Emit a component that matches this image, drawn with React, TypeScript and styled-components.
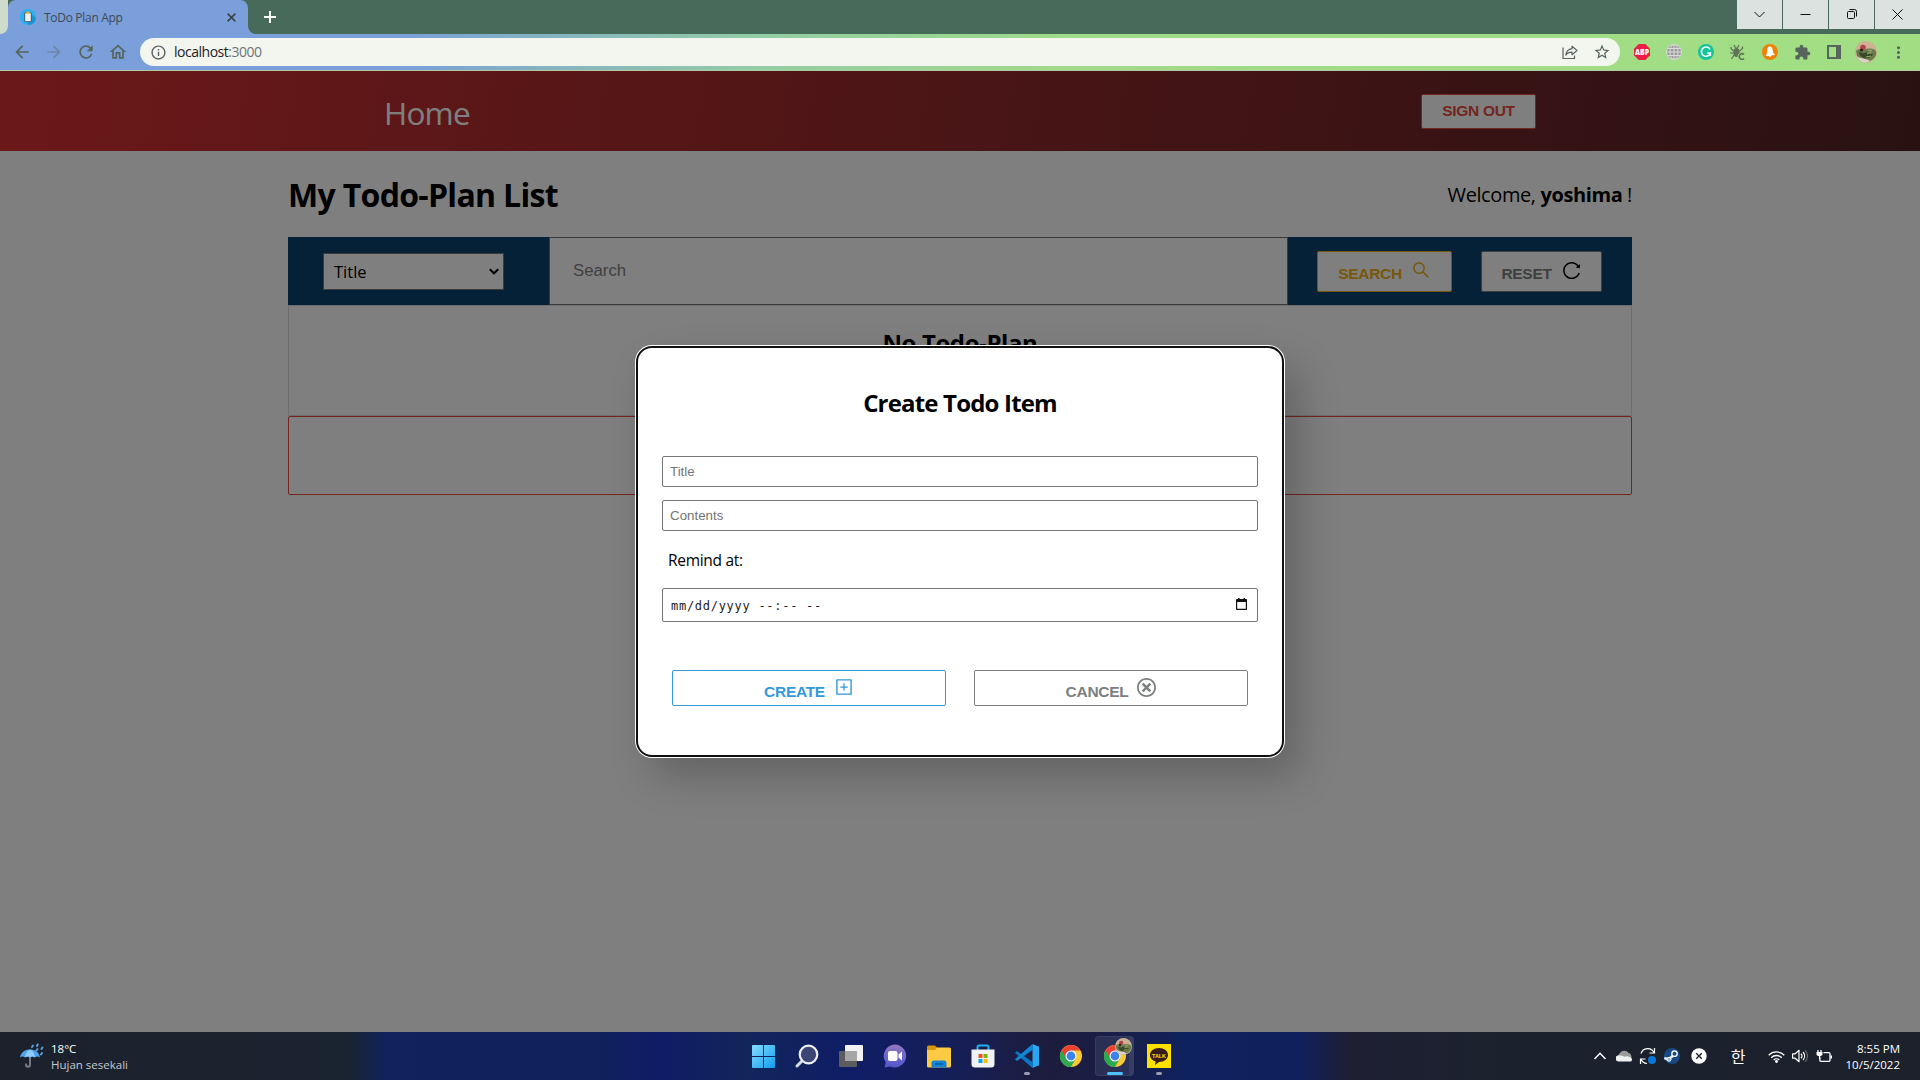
import React from "react";
import styled, { createGlobalStyle, css } from "styled-components";
import { MdArrowBack, MdArrowForward, MdRefresh, MdOutlineHome, MdInfoOutline, MdStarOutline, MdExtension, MdMoreVert } from "react-icons/md";
import { AiOutlineSearch, AiOutlineReload, AiOutlinePlusSquare } from "react-icons/ai";
import { ImCancelCircle } from "react-icons/im";

const ui = `"Segoe UI", "Open Sans", "Noto Sans", sans-serif`;
const arial = `"Liberation Sans", Arial, sans-serif`;

const GlobalStyle = createGlobalStyle`
  * { box-sizing: border-box; }
  body { margin: 0; background: #fff; font-family: ${ui}; overflow: hidden; }
  svg { display: block; flex: none; }
`;

const Screen = styled.div`
  width: 1920px;
  height: 1080px;
  display: flex;
  flex-direction: column;
  overflow: hidden;
`;

/* ---------- browser chrome ---------- */

const TabStrip = styled.div`
  height: 34px;
  display: flex;
  background: #476a5b;
`;
const PreviousTab = styled.div`
  width: 8px;
  background: #7a9fdb;
  &::before {
    content: "";
    display: block;
    height: 34px;
    background: #d0dccb;
    border-bottom-right-radius: 8px;
  }
`;
const Tab = styled.div`
  width: 240px;
  height: 34px;
  padding: 0 12px;
  display: flex;
  align-items: center;
  background: #7a9fdb;
  border-radius: 8px 8px 0 0;
`;
const TabCorner = styled.div`
  width: 8px;
  background: #7a9fdb;
  &::before {
    content: "";
    display: block;
    height: 34px;
    background: #476a5b;
    border-bottom-left-radius: 8px;
  }
`;
const TabTitle = styled.span`
  flex: 1;
  margin-left: 8px;
  font-size: 12px;
  letter-spacing: -0.3px;
  color: #3f4a52;
`;
const NewTab = styled.div`
  width: 28px;
  height: 34px;
  display: flex;
  align-items: center;
  justify-content: center;
`;
const WindowButtons = styled.div`
  margin-left: auto;
  display: flex;
  gap: 1px;
`;
const WindowButton = styled.div`
  width: 45px;
  height: 29px;
  display: flex;
  align-items: center;
  justify-content: center;
  background: #dce2e0;
`;
const Toolbar = styled.div`
  height: 37px;
  padding: 0 6px;
  display: flex;
  align-items: center;
  background: linear-gradient(90deg, #7a9fdb 0, #7a9fdb 400px, #82b0c4 520px, #93cda4 760px, #9fdb88 1080px, #a1de83 100%);
  border-bottom: 1px solid #b3c9a4;
`;
const ToolCell = styled.div<{ $faded?: boolean }>`
  width: 32px;
  height: 36px;
  display: flex;
  align-items: center;
  justify-content: center;
  color: #57645c;
  opacity: ${(p) => (p.$faded ? 0.4 : 1)};
`;
const Omnibox = styled.div`
  width: 1480px;
  height: 28px;
  margin: 0 6px;
  padding: 0 2px 0 10px;
  display: flex;
  align-items: center;
  border-radius: 14px;
  background: #f3f6ee;
  color: #5c6062;
`;
const Address = styled.span`
  flex: 1;
  margin-left: 7px;
  padding-bottom: 1px;
  font-size: 14px;
  letter-spacing: -0.48px;
  color: #70757a;
  b { font-weight: 400; color: #202124; }
`;

/* ---------- web page ---------- */

const Page = styled.main`
  height: 961px;
  position: relative;
  background: #fff;
`;
const Header = styled.header`
  height: 80px;
  padding: 0 384px;
  display: flex;
  align-items: center;
  justify-content: space-between;
  background: linear-gradient(100deg, #d83133, #522325);
`;
const HomeLink = styled.a`
  margin-top: 3px;
  font-size: 31.5px;
  letter-spacing: -0.8px;
  color: #fff;
`;
const tones = { red: "#e74c3c", yellow: "#eeb010", grey: "#7c7f80", blue: "#3498db" };
const Button = styled.button<{ $tone: keyof typeof tones; $width: number; $height: number; $drop?: number; $lift?: number }>`
  width: ${(p) => p.$width}px;
  height: ${(p) => p.$height}px;
  padding: 0;
  display: flex;
  align-items: center;
  justify-content: center;
  gap: 9px;
  font: bold 15.5px ${arial};
  letter-spacing: -0.3px;
  color: ${(p) => tones[p.$tone]};
  background: #fff;
  border: 1px solid currentColor;
  border-radius: 2px;
  span { padding-top: ${(p) => p.$drop ?? 0}px; }
  svg { margin-bottom: ${(p) => p.$lift ?? 0}px; }
`;
const Container = styled.section`
  width: 1344px;
  margin: 0 auto;
`;
const TitleRow = styled.div`
  height: 86px;
  padding-top: 1px;
  display: flex;
  align-items: center;
  justify-content: space-between;
`;
const PageTitle = styled.h1`
  margin: 0;
  font-size: 32px;
  font-weight: 700;
  letter-spacing: -0.68px;
`;
const Welcome = styled.div`
  font-size: 20px;
  letter-spacing: -0.4px;
`;
const SearchBar = styled.div`
  height: 68px;
  display: flex;
  background: #0a4270;
`;
const Filter = styled.div`
  width: 261px;
  padding: 16px 0 0 35px;
`;
const Select = styled.div`
  width: 181px;
  height: 37px;
  padding: 0 4px 0 10px;
  display: flex;
  align-items: center;
  justify-content: space-between;
  background: #fff;
  border: 1px solid #767676;
  font-size: 16.5px;
`;
const SearchInput = styled.input`
  width: 739px;
  padding: 0 23px;
  border: 1px solid #757575;
  background: #fff;
  font: 16.8px ${arial};
  &::placeholder { color: #828282; }
`;
const SearchActions = styled.div`
  flex: 1;
  padding: 14px 30px 0 29px;
  display: flex;
  justify-content: space-between;
`;
const ListBox = styled.div`
  height: 111px;
  padding-top: 20px;
  border: 1px solid #dcdcdc;
  text-align: center;
`;
const Heading = styled.h2<{ $spacing: number }>`
  margin: 0;
  font-size: 24px;
  line-height: 33px;
  font-weight: 700;
  letter-spacing: ${(p) => p.$spacing}px;
  text-align: center;
`;
const AddBox = styled.div`
  height: 79px;
  border: 1px solid #e74c3c;
  border-radius: 2px;
`;
const Backdrop = styled.div`
  position: absolute;
  inset: 0;
  padding-top: 275px;
  background: rgba(0, 0, 0, 0.5);
`;
const Dialog = styled.div`
  width: 648px;
  height: 411px;
  margin: 0 auto;
  padding: 38px 24px 0;
  background: #fff;
  border: 2px solid #101010;
  border-radius: 16px;
  box-shadow: 0 0 0 1px #fff, 15px 20px 40px rgba(0, 0, 0, 0.22);
`;
const DialogHead = styled.div`
  height: 70px;
`;
const fieldFrame = css`
  display: flex;
  width: 596px;
  border: 1px solid #767676;
  border-radius: 2px;
  padding: 0 10px 0 7px;
`;
const Field = styled.input`
  ${fieldFrame}
  height: 31px;
  margin-bottom: 13px;
  font: 13.33px ${arial};
  &::placeholder { color: #757575; }
`;
const Label = styled.label`
  display: block;
  height: 44px;
  padding: 5px 0 0 6px;
  font-size: 15.5px;
  line-height: 22px;
  letter-spacing: -0.3px;
`;
const DateField = styled.div`
  ${fieldFrame}
  height: 34px;
  padding-left: 8px;
  align-items: center;
  justify-content: space-between;
  font: 12px "DejaVu Sans Mono", monospace;
  letter-spacing: 0.72px;
  color: #222;
  span { padding-top: 2px; }
  svg { margin-bottom: 1px; }
`;
const DialogActions = styled.div`
  margin: 48px 10px 0;
  display: flex;
  justify-content: space-between;
`;

/* ---------- taskbar ---------- */

const Taskbar = styled.footer`
  height: 48px;
  display: grid;
  grid-template-columns: 741px 440px 1fr;
  color: #fff;
  font-size: 12px;
  background: linear-gradient(90deg, #1c212c 0, #1a2430 345px, #10235a 385px, #10215c 600px, #101b66 660px, #12265a 745px, #0f1d66 850px, #151f58 950px, #1d1c3c 1050px, #161f4d 1140px, #0f2260 1190px, #10205c 1300px, #1e1e33 1350px, #1b222d 1500px, #1c212c 100%);
`;
const Weather = styled.div`
  padding-left: 20px;
  display: flex;
  align-items: center;
  gap: 7px;
`;
const Lines = styled.div<{ $right?: boolean }>`
  display: flex;
  flex-direction: column;
  padding-top: 1px;
  line-height: 16px;
  font-size: 11.5px;
  text-align: ${(p) => (p.$right ? "right" : "left")};
  small { font-size: inherit; color: ${(p) => (p.$right ? "#fff" : "#c5c8cc")}; }
`;
const Apps = styled.div`
  display: flex;
`;
const AppCell = styled.div<{ $state?: "open" | "active" }>`
  width: 44px;
  height: 48px;
  position: relative;
  display: flex;
  align-items: center;
  justify-content: center;
  ${(p) =>
    p.$state === "active" &&
    css`
      &::before {
        content: "";
        position: absolute;
        inset: 4px 3px 4px 2px;
        border-radius: 4px;
        background: rgba(255, 255, 255, 0.08);
        border: 1px solid rgba(255, 255, 255, 0.07);
        border-right-width: 5px;
      }
    `}
  ${(p) =>
    p.$state &&
    css`
      &::after {
        content: "";
        position: absolute;
        bottom: 5px;
        width: ${p.$state === "active" ? 16 : 6}px;
        height: 3px;
        border-radius: 2px;
        background: ${p.$state === "active" ? "#4cc2ff" : "#9a9dac"};
      }
    `}
  svg { position: relative; }
`;
const Tray = styled.div`
  padding-right: 20px;
  display: flex;
  align-items: center;
  justify-content: flex-end;
`;
const TrayCell = styled.div<{ $before?: number }>`
  width: 24px;
  margin-left: ${(p) => p.$before ?? 0}px;
  display: flex;
  justify-content: center;
  font: 16px/20px "Noto Sans CJK KR", sans-serif;
`;
const Clock = styled(Lines)`
  width: 64px;
`;

/* ---------- drawings ---------- */

const Favicon = () => (
  <svg width="16" height="16" viewBox="0 0 16 16">
    <circle cx="8" cy="8" r="8" fill="#25b1f5" />
    <path d="M10 4l6 5a8 8 0 0 1-7 7l-3-4z" fill="#1596d8" />
    <rect x="4.3" y="3.4" width="7.4" height="9.6" rx="1" fill="#57535a" />
    <rect x="5.2" y="4.2" width="5.6" height="8" fill="#eef0f4" />
    <rect x="6.2" y="2.6" width="3.6" height="2" fill="#f1a72b" />
  </svg>
);
const Cross = ({ size, color, width }: { size: number; color: string; width: number }) => (
  <svg width={size} height={size} viewBox="0 0 10 10" stroke={color} strokeWidth={width}>
    <path d="M.7.7l8.6 8.6M9.3.7L.7 9.3" />
  </svg>
);
const Share = () => (
  <svg width="16" height="16" viewBox="0 0 16 16" fill="none" stroke="#5c6062" strokeWidth="1.2">
    <path d="M1 3.5v11h11.5v-3" />
    <path d="M10 2.2l5 4.3-5 4.2V8.2c-3 0-5 1-6.2 2.9C4.2 7.5 6.5 5.2 10 4.700z" strokeLinejoin="round" />
  </svg>
);
const Abp = () => (
  <svg width="16" height="16" viewBox="0 0 16 16">
    <path d="M4.700 0h6.600L16 4.700v6.600L11.300 16H4.700L0 11.300V4.700z" fill="#ed1e45" />
    <text x="8" y="11" textAnchor="middle" fontFamily="Open Sans" fontWeight="800" fontSize="8" fill="#fff" textLength="14" lengthAdjust="spacingAndGlyphs">ABP</text>
  </svg>
);
const Globe = () => (
  <svg width="16" height="16" viewBox="0 0 16 16" fill="none" stroke="#d9dcd9" strokeWidth="1">
    <circle cx="8" cy="8" r="7.500" fill="#9b9b9b" />
    <path d="M0 8h16M8 0v16M1 4.500h14M1 11.500h14" />
    <ellipse cx="8" cy="8" rx="4" ry="7.500" />
  </svg>
);
const Grammarly = () => (
  <svg width="16" height="16" viewBox="0 0 16 16">
    <circle cx="8" cy="8" r="8" fill="#15c39a" />
    <path d="M12 5.400A4.600 4.600 0 1 0 12.400 9H9.200M12.400 9v3" fill="none" stroke="#fff" strokeWidth="1.500" />
  </svg>
);
const Bug = () => (
  <svg width="16" height="16" viewBox="0 0 16 16" fill="none" stroke="#5f7158" strokeWidth="1.200">
    <ellipse cx="6.500" cy="8.500" rx="2.600" ry="4" fill="#5f7158" />
    <path d="M4 1l1.500 3h2L9 1M3.500 7L1 4.500V3M3.500 9H0M4 11l-2.500 4M9.500 7l3-2.500V2.500M9.500 9H13" />
    <path d="M14 10.600a2.800 2.800 0 1 0 0 4" stroke="#a0dc84" strokeWidth="3.500" />
    <path d="M14 10.400a2.800 2.800 0 1 0 0 4.200" strokeWidth="1.600" />
  </svg>
);
const Bell = () => (
  <svg width="16" height="16" viewBox="0 0 16 16">
    <circle cx="8" cy="8" r="8" fill="#ee8208" />
    <path d="M7 2.600c2.600-.6 3.400 1.200 3.600 3.200.2 2.400.6 3.500 2.600 5l-3.800.6c-.3 1.600-2 1.800-2.400.5L3.600 12c1.400-1.800 1.500-3.400 1.600-5.600.1-1.600.6-3 1.800-3.800z" fill="#fff" />
  </svg>
);
const SidePanel = () => (
  <svg width="14" height="14" viewBox="0 0 14 14">
    <path d="M0 0h14v14H0zM2 2v10h7V2z" fill="#57645c" fillRule="evenodd" />
  </svg>
);
const Avatar = ({ size }: { size: number }) => (
  <svg width={size} height={size} viewBox="0 0 22 22">
    <circle cx="11" cy="11" r="11" fill="#cdb193" />
    <path d="M1 10c3-3 5-2 8-1 4-2 9-2 12 1 1 5-2 8-6 10-6 1-11-1-13-5z" fill="#6c7a4a" />
    <path d="M4 11c2 0 3 2 5 1 3-2 5 2 9 1-1 3-5 5-9 4-3-1-5-3-5-6z" fill="#39472b" />
    <circle cx="8" cy="6.500" r="2.800" fill="#b5404c" />
    <circle cx="6.500" cy="9" r="1.500" fill="#2a1e1e" />
    <path d="M2 15c3 3 9 2 13 5-5 3-11 1-13-5z" fill="#ddd3ca" />
    <path d="M12 13l4-2M11 16l5-1M13 9l4 1" stroke="#9db070" strokeWidth="1" />
  </svg>
);
const CalendarIcon = () => (
  <svg width="11" height="13" viewBox="0 0 11 13">
    <path d="M2 0h1.500v1h4V0H9v1h1.200c.4 0 .8.4.8.8v9.400c0 .4-.4.8-.8.8H.8c-.4 0-.8-.4-.8-.8V1.800C0 1.400.4 1 .8 1H2zM1.200 4v6.800h8.600V4z" fill="#111" fillRule="evenodd" />
  </svg>
);
const Umbrella = () => (
  <svg width="24" height="26" viewBox="0 0 24 26">
    <path d="M10 7v14.500c0 3-4 3-4 0V20.500" fill="none" stroke="#777b80" strokeWidth="2" />
    <path d="M0 14.500C1 9 5 6.500 10 6.500S19 9 20 14.500c-2-1.500-3.500-1.500-5 0-2-1.500-3.500-1.500-5 0-1.500-1.500-3-1.500-5 0-1.500-1.500-3.500-1.500-5 0z" fill="#4ea3ee" />
    <path d="M5 14.500c.5-4 2-6.500 5-8 3 1.500 4.500 4 5 8-2-1.500-3.500-1.500-5 0-1.500-1.500-3-1.500-5 0z" fill="#8ccbfb" />
    <path d="M12 4l1-1.500M17 3l.7-1.500M16.500 7.500l1-1.500M21.500 6l1-1.500M21 11.500l1-1.500" stroke="#5c9fdb" strokeWidth="2" strokeLinecap="round" />
  </svg>
);
const Windows = () => (
  <svg width="23" height="23" viewBox="0 0 23 23">
    <defs>
      <linearGradient id="win" x1="0" y1="0" x2="1" y2="1">
        <stop offset="0" stopColor="#84defc" />
        <stop offset="1" stopColor="#119cf0" />
      </linearGradient>
    </defs>
    <path d="M0 1q0-1 1-1h10v11H0zM12 0h10q1 0 1 1v10H12zM0 12h11v11H1q-1 0-1-1zM12 12h11v10q0 1-1 1H12z" fill="url(#win)" />
  </svg>
);
const SearchGlass = () => (
  <svg width="24" height="24" viewBox="0 0 24 24" fill="none">
    <path d="M8 16l-6 6" stroke="#d5d9e2" strokeWidth="3" strokeLinecap="round" />
    <circle cx="13.500" cy="10.500" r="8.800" fill="#3c4674" stroke="#eceef3" strokeWidth="2.200" />
  </svg>
);
const TaskView = () => (
  <svg width="24" height="24" viewBox="0 0 24 24">
    <rect x="6" y="1" width="18" height="16" rx="1" fill="#f2f2f2" />
    <rect x="0" y="7" width="18" height="16" rx="1" fill="#5c5c5c" />
    <path d="M6 7h12v10H6z" fill="#a6a6a6" />
  </svg>
);
const Chat = () => (
  <svg width="24" height="24" viewBox="0 0 24 24">
    <defs>
      <linearGradient id="chat" x1="0" y1="0" x2="0" y2="1">
        <stop offset="0" stopColor="#9a78b8" />
        <stop offset=".5" stopColor="#6b66cf" />
        <stop offset="1" stopColor="#5558c8" />
      </linearGradient>
    </defs>
    <path d="M12 .5A11.500 11.500 0 1 1 7 22.500L1.500 23.500l1.300-5A11.500 11.500 0 0 1 12 .5z" fill="url(#chat)" />
    <rect x="5" y="7" width="9.500" height="10" rx="2" fill="#fff" />
    <path d="M15.500 10.500l3.500-3v9l-3.500-3z" fill="#fff" />
  </svg>
);
const Folder = () => (
  <svg width="24" height="23" viewBox="0 0 24 23">
    <path d="M0 2q0-1.500 1.500-1.500H8L10.500 3 8 6H0z" fill="#d9960d" />
    <path d="M0 5h8l2-2.500h12.500Q24 2.500 24 4v17q0 1.500-1.500 1.500h-21Q0 22.500 0 21z" fill="#fccb43" />
    <path d="M4.500 22.500V18Q4.500 15.500 7 15.500h10q2.500 0 2.500 2.500v4.500z" fill="#1684d6" />
    <path d="M8 19h8" stroke="#0b5ba5" strokeWidth="1.500" />
  </svg>
);
const Store = () => (
  <svg width="24" height="24" viewBox="0 0 24 24">
    <path d="M6.500 6V3q0-1.500 1.500-1.500h8q1.500 0 1.500 1.500v3" fill="none" stroke="#25aef0" strokeWidth="2" />
    <path d="M.5 5.500h23V20q0 3.500-3.500 3.500H4Q.5 23.500.5 20z" fill="#f0f2f5" />
    <path d="M7.500 10h4v4h-4z" fill="#f25022" />
    <path d="M12.500 10h4v4h-4z" fill="#7fba00" />
    <path d="M7.500 15h4v4h-4z" fill="#00a4ef" />
    <path d="M12.500 15h4v4h-4z" fill="#ffb900" />
  </svg>
);
const VsCode = () => (
  <svg width="24" height="24" viewBox="0 0 24 24">
    <path d="M17.500 0L24 2.800v18.400L17.500 24z" fill="#2aa7f2" />
    <path d="M17.500 24L0 8.800l2-1.800 16 11.500z" fill="#0a77c4" />
    <path d="M17.500 0L0 15.200 2 17 18 5.500z" fill="#1287d3" />
  </svg>
);
const Chrome = () => (
  <svg width="24" height="24" viewBox="0 0 24 24">
    <circle cx="12" cy="12" r="11" fill="#fcc934" />
    <path d="M12 12L2.470 6.500A11 11 0 0 1 21.500 6.500H12z" fill="#ea4335" />
    <path d="M2.470 6.500A11 11 0 0 0 12 23l4.760-8.250L12 12z" fill="#2da94f" />
    <path d="M2.470 6.500L7.200 14.800 12 12V6.500z" fill="#ea4335" />
    <path d="M2.470 6.500l4.770 8.250L12 23A11 11 0 0 1 2.470 6.500z" fill="#2da94f" />
    <circle cx="12" cy="12" r="5.500" fill="#fff" />
    <circle cx="12" cy="12" r="4.400" fill="#3b82ee" />
  </svg>
);
const ProfileBadge = styled.div`
  position: absolute;
  top: 6px;
  right: 5px;
`;
const Kakao = () => (
  <svg width="24" height="24" viewBox="0 0 24 24">
    <path d="M0 0h24v24H0z" fill="#fbe000" />
    <path d="M12 4c5.200 0 9 3 9 7s-3.800 7-9 7l-4 3 .7-3.600C5.300 16.500 3 14 3 11c0-4 3.800-7 9-7z" fill="#391b1b" />
    <text x="12" y="13.500" textAnchor="middle" fontFamily="Liberation Sans" fontWeight="700" fontSize="6.200" fill="#fbe000" textLength="14" lengthAdjust="spacingAndGlyphs">TALK</text>
  </svg>
);
const Chevron = () => (
  <svg width="12" height="8" viewBox="0 0 12 8" fill="none" stroke="#fff" strokeWidth="1.400"><path d="M.5 7L6 1.300 11.500 7" /></svg>
);
const Cloud = () => (
  <svg width="17" height="12" viewBox="0 0 17 12">
    <path d="M3 8a4 4 0 0 1 1-5A5 5 0 0 1 12.500 3c2 0 3 2 3 5z" fill="#9b9b9b" />
    <path d="M3.500 11.500a3.200 3.200 0 1 1 .5-6c2 0 3 .6 4.500 1.300 1.500-.8 4-1 5 .3 3 .2 3.500 4.400.5 4.400z" fill="#f0f0f0" />
  </svg>
);
const Sync = () => (
  <svg width="18" height="18" viewBox="0 0 18 18" fill="none" stroke="#fff" strokeWidth="1.200">
    <path d="M2 6.500A7 7 0 0 1 15 5.500M15.500 1v5h-5M1.500 17v-5h5M2 12a7 7 0 0 0 6 4.500" />
    <circle cx="13" cy="13" r="4" fill="#0a78d8" stroke="none" />
  </svg>
);
const Steam = () => (
  <svg width="16" height="16" viewBox="0 0 16 16">
    <circle cx="8" cy="8" r="8" fill="#164a86" />
    <path d="M.3 10l4 1.500 5-4" stroke="#dfe8f2" strokeWidth="2.600" fill="none" />
    <circle cx="10.500" cy="5.700" r="2.700" fill="#164a86" stroke="#fff" strokeWidth="1.300" />
    <circle cx="5" cy="11.300" r="2" fill="#8cb4dd" stroke="#fff" />
  </svg>
);
const CloseDisc = () => (
  <svg width="16" height="16" viewBox="0 0 16 16">
    <circle cx="8" cy="8" r="7.700" fill="#fff" />
    <path d="M5.200 5.200l5.600 5.600M10.800 5.200l-5.600 5.600" stroke="#20242e" strokeWidth="1.400" />
  </svg>
);
const Wifi = () => (
  <svg width="17" height="13" viewBox="0 0 17 13" fill="none" stroke="#fff" strokeWidth="1.300">
    <path d="M.7 5.200a11 11 0 0 1 15.600 0M3.200 7.700a7.500 7.500 0 0 1 10.600 0M5.700 10a4 4 0 0 1 5.600 0" />
    <circle cx="8.500" cy="11.500" r="1.400" fill="#fff" stroke="none" />
  </svg>
);
const Volume = () => (
  <svg width="16" height="14" viewBox="0 0 16 14" fill="none" stroke="#fff" strokeWidth="1.200">
    <path d="M.6 4.800h2.600L7 1.300v11.400L3.200 9.200H.6z" strokeLinejoin="round" />
    <path d="M9 4.800a3 3 0 0 1 0 4.400M11 3a6 6 0 0 1 0 8" />
    <path d="M13 1.200a8 8 0 0 1 0 11.600" stroke="#60656f" />
  </svg>
);
const Battery = () => (
  <svg width="16" height="13" viewBox="0 0 16 13" fill="none" stroke="#fff" strokeWidth="1.300">
    <path d="M7.500 2.700h5.300q1.200 0 1.200 1.200v6.200q0 1.200-1.200 1.200H5q-1.200 0-1.200-1.200V7.500" />
    <path d="M15.200 5.500v3" strokeWidth="1.600" />
    <path d="M.5 2h6v2.200q0 1.800-3 1.800t-3-1.800z" fill="#fff" stroke="none" />
    <path d="M2 0v2.500M5 0v2.500M3.600 5v4" />
  </svg>
);

const windowGlyphs = [
  <path key="down" d="M.5 3l5 5 5-5" />,
  <path key="min" d="M.5 5.500h10" />,
  <path key="restore" d="M2.500 2.500h5q1 0 1 1v5q0 1-1 1h-5q-1 0-1-1v-5q0-1 1-1zM3.500.5h5q2 0 2 2v5" />,
  <path key="close" d="M.5.5l10 10M10.500.5l-10 10" />,
];

const extensions = [<Abp />, <Globe />, <Grammarly />, <Bug />, <Bell />, <MdExtension size={17} />, <SidePanel />, <Avatar size={22} />, <MdMoreVert size={19} />];

const Browser = () => (
  <>
    <TabStrip>
      <PreviousTab />
      <Tab>
        <Favicon />
        <TabTitle>ToDo Plan App</TabTitle>
        <Cross size={9} color="#3a4348" width={1.8} />
      </Tab>
      <TabCorner />
      <NewTab>
        <svg width="12" height="12" viewBox="0 0 12 12" stroke="#fff" strokeWidth="2"><path d="M6 0v12M0 6h12" /></svg>
      </NewTab>
      <WindowButtons>
        {windowGlyphs.map((glyph, i) => (
          <WindowButton key={i}>
            <svg width="11" height="11" viewBox="0 0 11 11" fill="none" stroke="#111" strokeWidth="1">{glyph}</svg>
          </WindowButton>
        ))}
      </WindowButtons>
    </TabStrip>
    <Toolbar>
      <ToolCell><MdArrowBack size={20} /></ToolCell>
      <ToolCell $faded><MdArrowForward size={20} /></ToolCell>
      <ToolCell><MdRefresh size={20} /></ToolCell>
      <ToolCell><MdOutlineHome size={20} /></ToolCell>
      <Omnibox>
        <MdInfoOutline size={17} />
        <Address><b>localhost</b>:3000</Address>
        <ToolCell><Share /></ToolCell>
        <ToolCell><MdStarOutline size={18} /></ToolCell>
      </Omnibox>
      {extensions.map((icon, i) => (
        <ToolCell key={i}>{icon}</ToolCell>
      ))}
    </Toolbar>
  </>
);

const CreateDialog = () => (
  <Backdrop>
    <Dialog>
      <DialogHead>
        <Heading $spacing={-0.82}>Create Todo Item</Heading>
      </DialogHead>
      <Field placeholder="Title" />
      <Field placeholder="Contents" />
      <Label>Remind at:</Label>
      <DateField>
        <span>mm/dd/yyyy --:-- --</span>
        <CalendarIcon />
      </DateField>
      <DialogActions>
        <Button $tone="blue" $width={274} $height={36} $drop={7} $lift={3}>
          <span>CREATE</span>
          <AiOutlinePlusSquare size={20} />
        </Button>
        <Button $tone="grey" $width={274} $height={36} $drop={7} $lift={2}>
          <span>CANCEL</span>
          <ImCancelCircle size={19} />
        </Button>
      </DialogActions>
    </Dialog>
  </Backdrop>
);

const TodoPage = () => (
  <Page>
    <Header>
      <HomeLink>Home</HomeLink>
      <Button $tone="red" $width={115} $height={35}><span>SIGN OUT</span></Button>
    </Header>
    <Container>
      <TitleRow>
        <PageTitle>My Todo-Plan List</PageTitle>
        <Welcome>Welcome, <b>yoshima</b> !</Welcome>
      </TitleRow>
      <SearchBar>
        <Filter>
          <Select>
            Title
            <svg width="10" height="7" viewBox="0 0 10 7" fill="none" stroke="#000" strokeWidth="2"><path d="M.8 1.200L5 5.300l4.200-4.100" /></svg>
          </Select>
        </Filter>
        <SearchInput placeholder="Search" />
        <SearchActions>
          <Button $tone="yellow" $width={135} $height={41} $drop={5} $lift={3}>
            <span>SEARCH</span>
            <AiOutlineSearch size={20} />
          </Button>
          <Button $tone="grey" $width={121} $height={41} $drop={5} $lift={3}>
            <span>RESET</span>
            <AiOutlineReload size={21} color="#000" />
          </Button>
        </SearchActions>
      </SearchBar>
      <ListBox><Heading $spacing={-0.4}>No Todo-Plan</Heading></ListBox>
      <AddBox />
    </Container>
    <CreateDialog />
  </Page>
);

const SystemBar = () => (
  <Taskbar>
    <Weather>
      <Umbrella />
      <Lines><span>18°C</span><small>Hujan sesekali</small></Lines>
    </Weather>
    <Apps>
      <AppCell><Windows /></AppCell>
      <AppCell><SearchGlass /></AppCell>
      <AppCell><TaskView /></AppCell>
      <AppCell><Chat /></AppCell>
      <AppCell><Folder /></AppCell>
      <AppCell><Store /></AppCell>
      <AppCell $state="open"><VsCode /></AppCell>
      <AppCell><Chrome /></AppCell>
      <AppCell $state="active">
        <Chrome />
        <ProfileBadge><Avatar size={17} /></ProfileBadge>
      </AppCell>
      <AppCell $state="open"><Kakao /></AppCell>
    </Apps>
    <Tray>
      <TrayCell><Chevron /></TrayCell>
      <TrayCell><Cloud /></TrayCell>
      <TrayCell><Sync /></TrayCell>
      <TrayCell><Steam /></TrayCell>
      <TrayCell $before={3}><CloseDisc /></TrayCell>
      <TrayCell $before={15}>한</TrayCell>
      <TrayCell $before={14}><Wifi /></TrayCell>
      <TrayCell><Volume /></TrayCell>
      <TrayCell><Battery /></TrayCell>
      <Clock $right><span>8:55 PM</span><small>10/5/2022</small></Clock>
    </Tray>
  </Taskbar>
);

export default function App() {
  return (
    <Screen>
      <GlobalStyle />
      <Browser />
      <TodoPage />
      <SystemBar />
    </Screen>
  );
}
